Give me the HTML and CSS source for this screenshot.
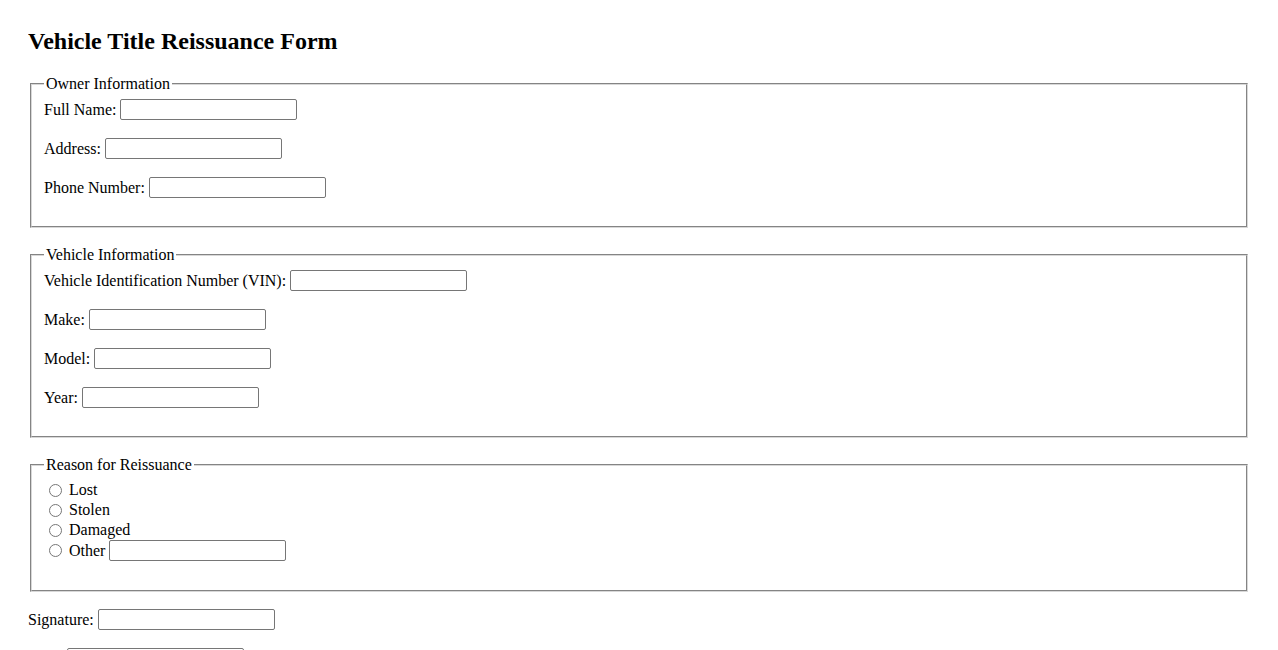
FILE: index.html
```html
<!DOCTYPE html>
<html lang="en">
<head>
<meta charset="utf-8">
<title>Vehicle Title Reissuance Form</title>
<link rel="stylesheet" href="styles.css">
</head>
<body class="page">
<h2 class="title">Vehicle Title Reissuance Form</h2>
<form class="form">
  <fieldset class="group">
    <legend class="group-legend">Owner Information</legend>
    <div class="row"><label class="row-label">Full Name:</label><input type="text" class="field"></div>
    <div class="row"><label class="row-label">Address:</label><input type="text" class="field"></div>
    <div class="row"><label class="row-label">Phone Number:</label><input type="text" class="field"></div>
  </fieldset>
  <fieldset class="group">
    <legend class="group-legend">Vehicle Information</legend>
    <div class="row"><label class="row-label">Vehicle Identification Number (VIN):</label><input type="text" class="field"></div>
    <div class="row"><label class="row-label">Make:</label><input type="text" class="field"></div>
    <div class="row"><label class="row-label">Model:</label><input type="text" class="field"></div>
    <div class="row"><label class="row-label">Year:</label><input type="text" class="field"></div>
  </fieldset>
  <fieldset class="group group-radios">
    <legend class="group-legend">Reason for Reissuance</legend>
    <label class="radio-row"><input type="radio" name="reason" class="radio"><span class="radio-text">Lost</span></label>
    <label class="radio-row"><input type="radio" name="reason" class="radio"><span class="radio-text">Stolen</span></label>
    <label class="radio-row"><input type="radio" name="reason" class="radio"><span class="radio-text">Damaged</span></label>
    <div class="radio-row radio-last"><input type="radio" name="reason" class="radio"><span class="radio-text">Other</span><input type="text" class="field"></div>
  </fieldset>
  <div class="row"><label class="row-label">Signature:</label><input type="text" class="field"></div>
  <div class="row"><label class="row-label">Date:</label><input type="text" class="field"></div>
  <div class="row"><input type="submit" value="Submit" class="submit"></div>
</form>
</body>
</html>
```
FILE: styles.css
```css
html, body {
  background: #fff;
}
.page {
  margin: 28px;
  font-family: "Liberation Serif", "Times New Roman", serif;
  font-size: 16px;
  color: #000;
}
.title {
  font-size: 24px;
  font-weight: bold;
  margin: 0 0 20px 0;
}
.form {
  margin: 0;
}
.group {
  margin: 0 2px 18.2px 2px;
  padding: 5.8px 12px 10px 12px;
  border: 2px groove #d8d8d8;
}
.group-radios {
  padding-top: 6.3px;
  margin-bottom: 17.5px;
}
.group-legend {
  padding: 0 2px;
}
.row {
  display: flex;
  align-items: center;
  gap: 4px;
  height: 21px;
  margin-bottom: 18px;
  white-space: nowrap;
}
.row-label {
  padding-top: 1px;
}
.field {
  width: 171px;
  height: 17px;
  padding: 1px 2px;
  border: 1px solid #767676;
  border-radius: 2px;
  font-size: 13.333px;
  font-family: Arial, "Liberation Sans", sans-serif;
  margin: 0;
  flex: none;
}
.radio-row {
  display: flex;
  align-items: center;
  gap: 4px;
  height: 20px;
  white-space: nowrap;
}
.radio-last {
  height: 21px;
  margin-bottom: 18.5px;
}
.radio {
  margin: 0 0 0 5px;
  width: 13px;
  height: 13px;
  flex: none;
}
.radio-text {
  margin-left: 3px;
}
.submit {
  font-size: 13.333px;
  font-family: Arial, "Liberation Sans", sans-serif;
  margin: 0;
}
```
